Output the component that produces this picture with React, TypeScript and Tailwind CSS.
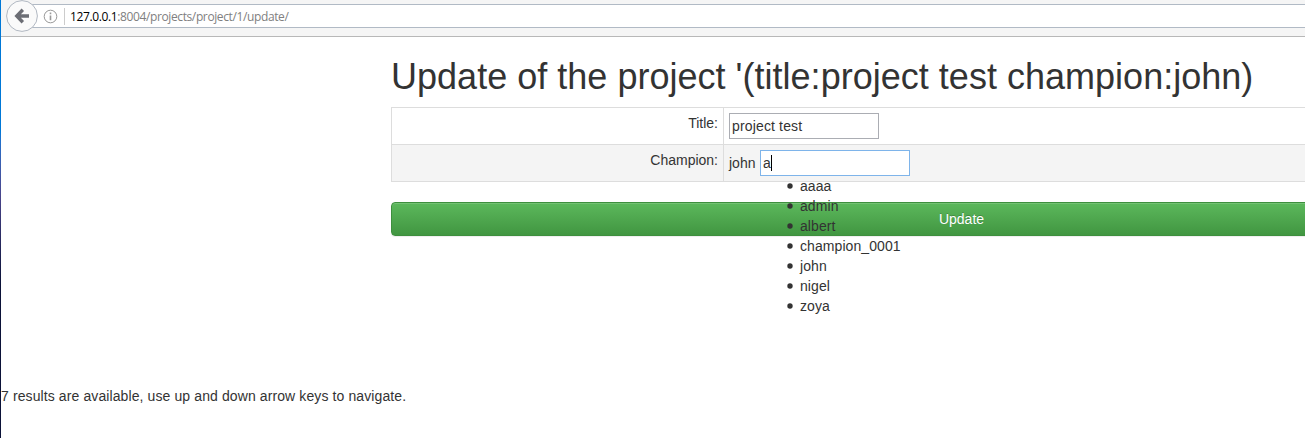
const results = ['aaaa', 'admin', 'albert', 'champion_0001', 'john', 'nigel', 'zoya'];

function Toolbar() {
  return (
    <header className="flex h-[37px] border-b border-[#b8b8b8] bg-[#f5f5f5] pt-1">
      <div className="relative flex h-6 w-full items-center border-y border-[#b1bac5] bg-white pl-[42px]">
        <svg className="absolute -top-[5px] left-[4px] h-[34px] w-[34px]" viewBox="0 0 34 34" fill="none">
          <rect x="-4" y="0" width="21" height="32" fill="#f5f5f5" />
          <circle cx="17" cy="16" r="15.4" fill="#fafafa" stroke="#b1b8c2" />
          <path d="M17.8 9.8 11.8 16l6 6.2M12.5 16H24" stroke="#6b6d74" strokeWidth="3.4" />
        </svg>
        <span className="absolute -top-px left-0 h-6 w-[5px] bg-[#f5f5f5]" />
        <svg className="h-[15px] w-[15px]" viewBox="0 0 15 15" fill="none">
          <circle cx="7.5" cy="7.5" r="6.3" stroke="#999999" />
          <path d="M7.5 6.5v4.8M7.5 3.5v1.7" stroke="#999999" strokeWidth="1.6" />
        </svg>
        <span className="ml-[6px] h-[17px] w-px bg-[#cccccc]" />
        <span className="relative top-px ml-[5px] whitespace-nowrap font-['Open_Sans',sans-serif] text-[12px] leading-[20px] tracking-[-0.38px] text-[#808080]">
          <span className="text-black">127.0.0.1</span>:8004/projects/project/1/update/
        </span>
      </div>
    </header>
  );
}

export default function App() {
  return (
    <div className="flex h-[438px] w-full overflow-hidden bg-white font-['Liberation_Sans',Arial,sans-serif] text-[14px] leading-[20px] text-[#333333]">
      <div className="w-px shrink-0 bg-linear-to-b from-[#0078d7] from-30% via-[#48448a] via-45% to-[#0b1238] to-65%" />
      <div className="flex min-w-0 flex-1 flex-col">
        <Toolbar />
        <main className="ml-[390px] w-[1140px]">
          <h1 className="mt-[20px] mb-[10px] h-[40px] whitespace-nowrap text-[36px] leading-[40px] tracking-[0.018px]">
            Update of the project '(title:project test champion:john)
          </h1>
          <div className="border border-b-0 border-[#dddddd]">
            <div className="flex h-[37px] border-b border-[#dddddd]">
              <div className="w-[332px] border-r border-[#dddddd] p-[5px] text-right">Title:</div>
              <div className="p-[5px]">
                <input
                  className="block h-[26px] w-[150px] border border-[#abadb3] bg-white px-[2px] tracking-[0.15px] outline-none"
                  defaultValue="project test"
                />
              </div>
            </div>
            <div className="flex h-[37px] border-b border-[#dddddd] bg-[#f4f4f4]">
              <div className="w-[332px] border-r border-[#dddddd] p-[5px] text-right">Champion:</div>
              <div className="flex items-center gap-[5px] p-[5px]">
                <span className="w-[26px]">john</span>
                <div className="relative flex h-[26px] w-[150px] items-center border border-[#7eb4ea] bg-white px-[2px]">
                  <span>a</span>
                  <span className="h-4 w-px bg-black" />
                  <ul className="absolute top-[25px] left-[39px] z-10">
                    {results.map((name) => (
                      <li key={name} className="flex items-center whitespace-nowrap tracking-[0.08px]">
                        <svg className="mr-[7px] ml-[-13px] h-[6px] w-[6px]" viewBox="0 0 6 6">
                          <circle cx="3" cy="3" r="2.7" fill="#333333" />
                        </svg>
                        {name}
                      </li>
                    ))}
                  </ul>
                </div>
              </div>
            </div>
          </div>
          <button className="mt-[20px] block h-[34px] w-full rounded-[4px] border border-[#3e8f3e] bg-linear-to-b from-[#5cb85c] to-[#419641] pl-px text-center text-white shadow-[inset_0_1px_0_rgba(255,255,255,0.15),0_1px_1px_rgba(0,0,0,0.075)] [text-shadow:0_-1px_0_rgba(0,0,0,0.2)]">
            Update
          </button>
        </main>
        <p className="mt-[150px] tracking-[0.105px]">
          7 results are available, use up and down arrow keys to navigate.
        </p>
      </div>
    </div>
  );
}
